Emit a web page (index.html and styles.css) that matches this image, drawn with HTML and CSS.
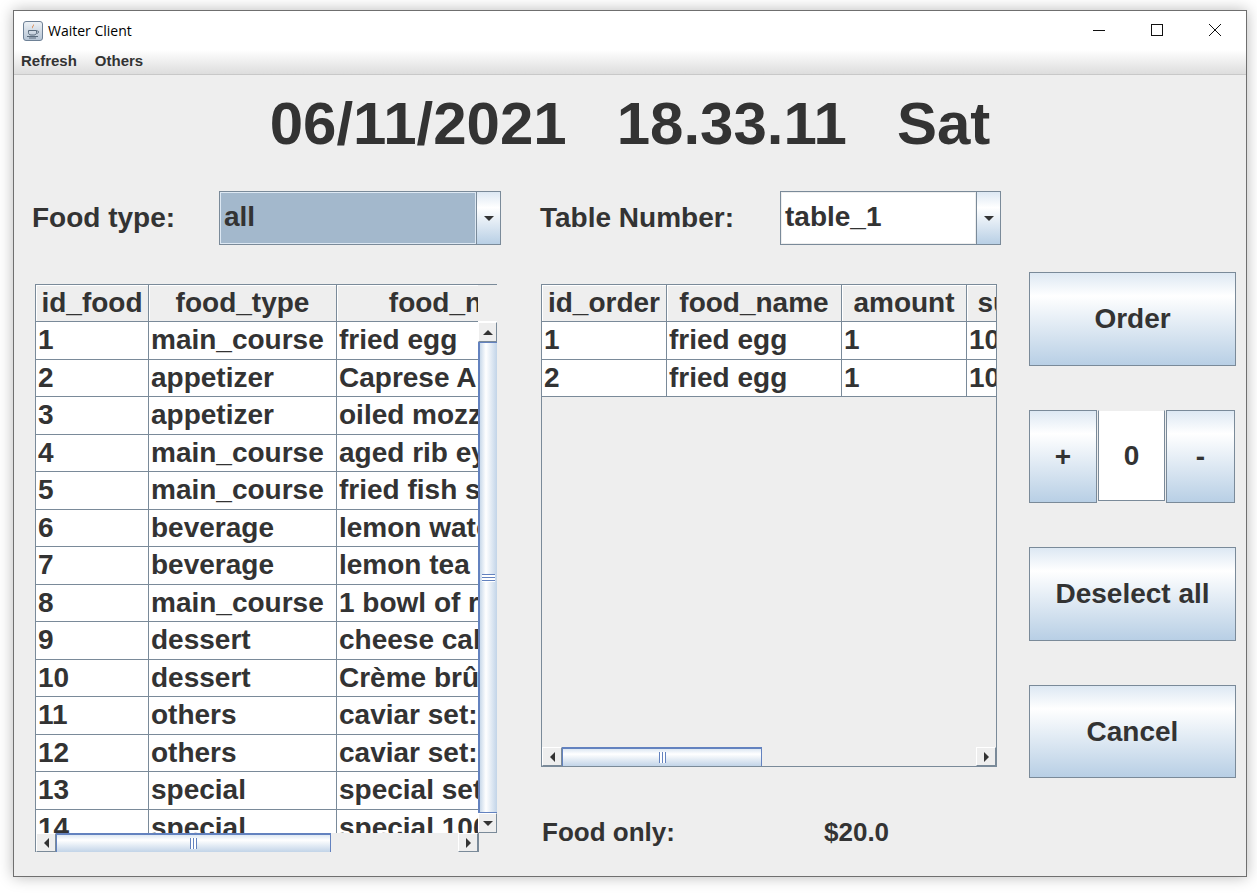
FILE: index.html
```html
<!DOCTYPE html>
<html lang="en">
<head>
<meta charset="utf-8">
<title>Waiter Client</title>
<link rel="stylesheet" href="styles.css">
</head>
<body>
<div class="window">
  <div class="titlebar">
    <svg class="app-icon" width="20" height="20" viewBox="0 0 20 20">
      <defs><linearGradient id="ig" x1="0" y1="0" x2="0" y2="1"><stop offset="0" stop-color="#eef2f6"/><stop offset="1" stop-color="#b4c3d3"/></linearGradient></defs>
      <rect x=".5" y=".5" width="19" height="19" rx="2.5" fill="url(#ig)" stroke="#6e8196"/>
      <path d="M10.5 3c1.5 1.6-1.6 2.6-.5 4.6-2.4-1.6.9-2.8.5-4.6z" fill="#d9722b"/>
      <path d="M5.5 9.5h8v2.2c0 1.4-1.2 2.3-2.6 2.3H8c-1.4 0-2.5-.9-2.5-2.3zM13.5 10h1.2c1.3 0 1.3 2-.2 2.2h-1" fill="none" stroke="#5a6b7c" stroke-width="1"/>
      <path d="M4 15.5h11M6 17h7" stroke="#5a6b7c" stroke-width="1"/>
    </svg>
    <span class="title-text">Waiter Client</span>
    <div class="win-controls">
      <svg class="win-btn" width="58" height="14" viewBox="0 0 58 14"><path d="M23 7.5h12" stroke="#111" fill="none"/></svg>
      <svg class="win-btn" width="58" height="14" viewBox="0 0 58 14"><rect x="23.5" y="1.5" width="11" height="11" fill="none" stroke="#111"/></svg>
      <svg class="win-btn" width="58" height="14" viewBox="0 0 58 14"><path d="M23 1l12 12M35 1L23 13" fill="none" stroke="#111"/></svg>
    </div>
  </div>
  <div class="menubar"><span>Refresh</span><span>Others</span></div>

  <div class="clock">06/11/2021   18.33.11   Sat</div>

  <div class="controls">
    <span class="ctl-label label-food">Food type:</span>
    <div class="combo combo-food"><span class="combo-value selected">all</span><span class="combo-arrow"><i class="tri down"></i></span></div>
    <span class="ctl-label label-table">Table Number:</span>
    <div class="combo combo-table"><span class="combo-value">table_1</span><span class="combo-arrow"><i class="tri down"></i></span></div>
  </div>

  <div class="workspace">
    <div class="scrollpane pane-food">
      <div class="thead cols-food"><div>id_food</div><div>food_type</div><div>food_name</div></div>
      <div class="head-filler"></div>
      <div class="tbody">
        <div class="row cols-food"><div>1</div><div>main_course</div><div>fried egg</div></div>
        <div class="row cols-food"><div>2</div><div>appetizer</div><div>Caprese Appetizer</div></div>
        <div class="row cols-food"><div>3</div><div>appetizer</div><div>oiled mozzarella</div></div>
        <div class="row cols-food"><div>4</div><div>main_course</div><div>aged rib eye steak</div></div>
        <div class="row cols-food"><div>5</div><div>main_course</div><div>fried fish set</div></div>
        <div class="row cols-food"><div>6</div><div>beverage</div><div>lemon water</div></div>
        <div class="row cols-food"><div>7</div><div>beverage</div><div>lemon tea</div></div>
        <div class="row cols-food"><div>8</div><div>main_course</div><div>1 bowl of rice</div></div>
        <div class="row cols-food"><div>9</div><div>dessert</div><div>cheese cake</div></div>
        <div class="row cols-food"><div>10</div><div>dessert</div><div>Crème brûlée</div></div>
        <div class="row cols-food"><div>11</div><div>others</div><div>caviar set: 1</div></div>
        <div class="row cols-food"><div>12</div><div>others</div><div>caviar set: 2</div></div>
        <div class="row cols-food"><div>13</div><div>special</div><div>special set</div></div>
        <div class="row cols-food"><div>14</div><div>special</div><div>special 100</div></div>
      </div>
      <div class="vbar">
        <span class="sb-btn"><i class="tri up"></i></span>
        <div class="vtrack"><div class="vthumb"><i class="vgrip"></i></div></div>
        <span class="sb-btn"><i class="tri down"></i></span>
      </div>
      <div class="hbar">
        <span class="sb-btn"><i class="tri left"></i></span>
        <div class="htrack"><div class="hthumb thumb-food"><i class="hgrip"></i></div></div>
        <span class="sb-btn"><i class="tri right"></i></span>
      </div>
      <div class="corner"></div>
    </div>

    <div class="order-col">
      <div class="scrollpane pane-order">
        <div class="thead cols-order"><div>id_order</div><div>food_name</div><div>amount</div><div>subtotal</div></div>
        <div class="tbody">
          <div class="row cols-order"><div>1</div><div>fried egg</div><div>1</div><div>10.0</div></div>
          <div class="row cols-order"><div>2</div><div>fried egg</div><div>1</div><div>10.0</div></div>
        </div>
        <div class="hbar">
          <span class="sb-btn"><i class="tri left"></i></span>
          <div class="htrack"><div class="hthumb thumb-order"><i class="hgrip"></i></div></div>
          <span class="sb-btn"><i class="tri right"></i></span>
        </div>
      </div>
      <div class="total"><span class="total-label">Food only:</span><span>$20.0</span></div>
    </div>

    <div class="actions">
      <button class="btn">Order</button>
      <div class="stepper">
        <button class="btn">+</button>
        <div class="qty">0</div>
        <button class="btn">-</button>
      </div>
      <button class="btn">Deselect all</button>
      <button class="btn">Cancel</button>
    </div>
  </div>
</div>
</body>
</html>
```
FILE: styles.css
```css
* { box-sizing: border-box; }
html, body { margin: 0; padding: 0; background: #fff; }
body { padding: 10px 10px 0 13px; height: 894px; overflow: hidden; font-family: "Liberation Sans", Arial, sans-serif; color: #333; }

.window { width: 1234px; height: 867px; border: 1px solid #6f6f6f; background: #eee; box-shadow: 0 0 14px rgba(0,0,0,.28); overflow: hidden; }

.titlebar { height: 39px; background: #fff; display: flex; align-items: center; padding-left: 9px; }
.app-icon { flex: none; }
.title-text { margin-left: 5px; font: 14px "Open Sans", sans-serif; color: #000; }
.win-controls { margin-left: auto; display: flex; padding-right: 2px; margin-top: -2px; }
.win-btn { display: block; }

.menubar { height: 25px; display: flex; align-items: center; gap: 18px; padding-left: 7px; padding-bottom: 4px; background: linear-gradient(#fff, #ddd); border-bottom: 1px solid #c8c8c8; font-size: 15px; font-weight: bold; }

.clock { height: 98px; margin-bottom: 18px; line-height: 98px; text-align: center; font-size: 60px; font-weight: bold; white-space: pre; }

.controls { height: 54px; display: flex; align-items: center; padding-left: 18px; }
.ctl-label { font-size: 28px; font-weight: bold; white-space: nowrap; margin-top: -1px; }
.label-food { width: 187px; }
.label-table { width: 240px; margin-left: 39px; }

.combo { height: 54px; display: flex; border: 1px solid #7a8a99; background: #fff; }
.combo-food { width: 282px; }
.combo-table { width: 221px; }
.combo-value { flex: 1; font-size: 28px; font-weight: bold; line-height: 48px; padding-left: 3px; border: 1px solid #eee; }
.combo-value.selected { background: #a3b8cc; border-color: #dde8f3; }
.combo-arrow { width: 24px; flex: none; display: flex; align-items: center; justify-content: center; border-left: 1px solid #7a8a99; background: linear-gradient(#dde8f3, #fff 30%, #b8cfe5); }

.tri { display: block; width: 0; height: 0; border-style: solid; border-color: transparent; }
.tri.down { border-width: 5px 5px 0; border-top-color: #333; }
.tri.up { border-width: 0 5px 5px; border-bottom-color: #333; }
.tri.left { border-width: 5px 5px 5px 0; border-right-color: #333; }
.tri.right { border-width: 5px 0 5px 5px; border-left-color: #333; }

.workspace { margin-top: 27px; padding-left: 21px; display: grid; grid-template-columns: 462px 456px 207px; column-gap: 44px; align-items: start; }
.workspace { column-gap: 0; grid-template-columns: 506px 488px 207px; }

.scrollpane { margin-top: 12px; border: 1px solid #7a8a99; border-top-color: #7a8a99; display: grid; }
.pane-food { width: 462px; height: 568px; grid-template-columns: 442px 19px; grid-template-rows: 37px 511px 19px; }
.pane-order { width: 456px; height: 483px; grid-template-columns: 454px; grid-template-rows: 37px 425px 19px; }

.thead { display: grid; overflow: hidden; height: 37px; background: #eee; border-bottom: 1px solid #7a8a99; font-size: 28px; font-weight: bold; white-space: nowrap; }
.thead > div { text-align: center; line-height: 36px; border-right: 1px solid #7a8a99; box-shadow: inset 1px 1px 0 #fff; }
.head-filler { background: #eee; border-bottom: 1px solid #fff; }

.cols-food { grid-template-columns: 113px 188px 254px; width: 555px; }
.cols-order { grid-template-columns: 125px 175px 125px 131px; width: 556px; }

.tbody { overflow: hidden; min-width: 0; }
.pane-food .thead, .pane-order .thead { width: auto; }

.row { display: grid; height: 37.5px; background: #fff; font-size: 28px; font-weight: bold; white-space: nowrap; }
.row > div { padding-left: 2px; line-height: 36px; border-right: 1px solid #7a8a99; border-bottom: 1px solid #7a8a99; overflow: hidden; }

.vbar { display: flex; flex-direction: column; }
.vbar .sb-btn { height: 20px; }
.sb-btn { flex: none; display: flex; align-items: center; justify-content: center; background: #eee; border: 1px solid #fff; border-color: #fff #7a8a99 #7a8a99 #fff; }
.vtrack { flex: 1; min-height: 0; background: #eee; }
.vthumb { height: 471px; display: flex; align-items: center; justify-content: center; border-left: 2px solid #6382bf; border-top: 1px solid #6382bf; border-bottom: 1px solid #6382bf; background: linear-gradient(to right, #c9d9ea, #fff 35%, #c2d4e8); }
.vgrip { display: block; width: 13px; height: 8px; background: repeating-linear-gradient(#6382bf 0 1px, #fff 1px 3px); }

.hbar { display: flex; grid-column: 1; }
.hbar .sb-btn { width: 20px; }
.htrack { flex: 1; min-width: 0; background: #eee; border-left: 0; }
.hthumb { height: 100%; display: flex; align-items: center; justify-content: center; border-top: 2px solid #6382bf; border-right: 1px solid #6382bf; border-left: 1px solid #6382bf; background: linear-gradient(#dde8f3, #fff 30%, #c2d4e8); }
.thumb-food { width: 275px; }
.thumb-order { width: 200px; }
.hgrip { display: block; width: 7px; height: 11px; background: repeating-linear-gradient(to right, #6382bf 0 1px, #fff 1px 3px); }
.corner { background: #eee; border-left: 1px solid #7a8a99; }

.total { margin-top: 49px; height: 32px; display: flex; align-items: center; padding-left: 1px; font-size: 26px; font-weight: bold; }
.total-label { width: 282px; }

.actions { display: grid; grid-template-rows: 94px 93px 94px 93px; row-gap: 44px; }
.btn { display: block; width: 100%; height: 100%; padding: 0; border: 1px solid #7a8a99; background: linear-gradient(#dde8f3, #fff 25%, #b8cfe5); font: bold 28px "Liberation Sans", Arial, sans-serif; color: #333; }
.stepper { display: grid; grid-template-columns: 68px 67px 69px; column-gap: 1px; }
.qty { background: #fff; border: 1px solid #7a8a99; border-top-color: #eee; font-size: 28px; font-weight: bold; text-align: center; line-height: 89px; height: 91px; }
```
